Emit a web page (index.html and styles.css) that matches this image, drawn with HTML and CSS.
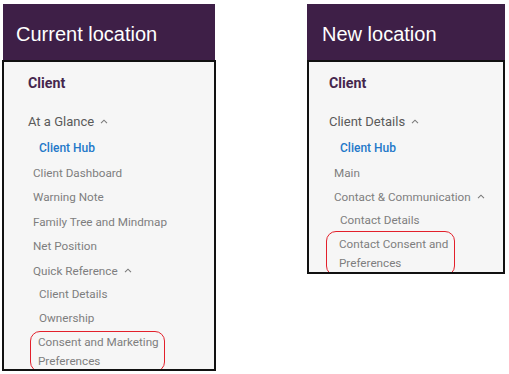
FILE: index.html
```html
<!DOCTYPE html>
<html lang="en">
<head>
    <meta charset="UTF-8">
    <meta name="viewport" content="width=device-width, initial-scale=1.0">
    <title>Menu Location</title>
    <link rel="stylesheet" href="styles.css">
</head>
<body>
    <div class="panel panel-current">
        <div class="panel-header">Current location</div>
        <div class="menu">
            <div class="menu-title">Client</div>
            <div class="menu-group">At a Glance <svg class="chevron" viewBox="0 0 8 5"><path d="M1 4.2 L4 1.2 L7 4.2"/></svg></div>
            <ul class="menu-list">
                <li class="menu-item active">Client Hub</li>
                <li class="menu-item flat">Client Dashboard</li>
                <li class="menu-item flat">Warning Note</li>
                <li class="menu-item flat">Family Tree and Mindmap</li>
                <li class="menu-item flat">Net Position</li>
                <li class="menu-item flat">Quick Reference <svg class="chevron" viewBox="0 0 8 5"><path d="M1 4.2 L4 1.2 L7 4.2"/></svg></li>
            </ul>
            <ul class="menu-list sub">
                <li class="menu-item">Client Details</li>
                <li class="menu-item">Ownership</li>
                <li class="menu-item marked-row"><span class="marked">Consent and Marketing<br>Preferences</span></li>
            </ul>
        </div>
    </div>

    <div class="panel panel-new">
        <div class="panel-header">New location</div>
        <div class="menu">
            <div class="menu-title">Client</div>
            <div class="menu-group">Client Details <svg class="chevron" viewBox="0 0 8 5"><path d="M1 4.2 L4 1.2 L7 4.2"/></svg></div>
            <ul class="menu-list">
                <li class="menu-item active">Client Hub</li>
                <li class="menu-item flat">Main</li>
                <li class="menu-item flat">Contact &amp; Communication <svg class="chevron" viewBox="0 0 8 5"><path d="M1 4.2 L4 1.2 L7 4.2"/></svg></li>
            </ul>
            <ul class="menu-list sub">
                <li class="menu-item tight">Contact Details</li>
                <li class="menu-item marked-row"><span class="marked">Contact Consent and<br>Preferences</span></li>
            </ul>
        </div>
    </div>
</body>
</html>
```

FILE: styles.css
```css
body {
    margin: 0;
    padding: 4px 0 0 2px;
    display: flex;
    align-items: flex-start;
    gap: 91px;
    background-color: #fff;
    font-family: Roboto, "Liberation Sans", Arial, sans-serif;
}
.panel {
    display: flex;
    flex-direction: column;
}
.panel-current {
    width: 214px;
}
.panel-new {
    width: 198px;
}
.panel-header {
    height: 56px;
    margin: 0 1px;
    padding-left: 13px;
    box-sizing: border-box;
    background-color: #3e1f47;
    color: #fff;
    font-family: "Liberation Sans", Arial, sans-serif;
    font-size: 20px;
    line-height: 60px;
}
.panel-new .panel-header {
    margin: 0;
    padding-left: 15px;
}
.menu {
    border: 2px solid #111;
    background-color: #f6f6f6;
    padding: 11px 0 0 0;
    box-sizing: border-box;
    overflow: hidden;
}
.panel-current .menu {
    height: 311px;
    padding-left: 24px;
}
.panel-new .menu {
    height: 214px;
    padding-left: 20px;
}
.menu-title {
    font-size: 14.2px;
    font-weight: 700;
    color: #45264d;
    line-height: 20px;
}
.menu-group {
    margin-top: 19px;
    font-size: 13px;
    color: #5a5a5a;
    line-height: 20px;
}
.chevron {
    width: 8px;
    height: 5px;
    margin-left: 3px;
    vertical-align: 2px;
    fill: none;
    stroke: #7a7a7a;
    stroke-width: 1.1;
}
.menu-list {
    list-style: none;
    margin: 4px 0 0 0;
    padding: 0 0 0 11px;
}
.menu-item {
    font-size: 11.7px;
    color: #7e7e7e;
    line-height: 24.5px;
}
.menu-item.flat {
    margin-left: -6px;
}
.menu-item.active {
    color: #2378c9;
    font-weight: 500;
    font-size: 12px;
}
.menu-list.sub {
    margin-top: 0;
}
.panel-current .menu-list.sub {
    margin-top: -1.5px;
}
.menu-list.sub .menu-item {
    line-height: 24px;
}
.menu-list.sub .menu-item.tight {
    line-height: 20px;
}
.marked-row {
    padding-top: 1px;
}
.marked {
    display: inline-block;
    margin-left: -9px;
    padding: 1px 5px 0 7px;
    border: 1.5px solid #e3202b;
    border-radius: 10px;
    line-height: 19px;
}
.panel-new .marked {
    margin-left: -14px;
    padding: 3px 6px 2px 12px;
}
```
